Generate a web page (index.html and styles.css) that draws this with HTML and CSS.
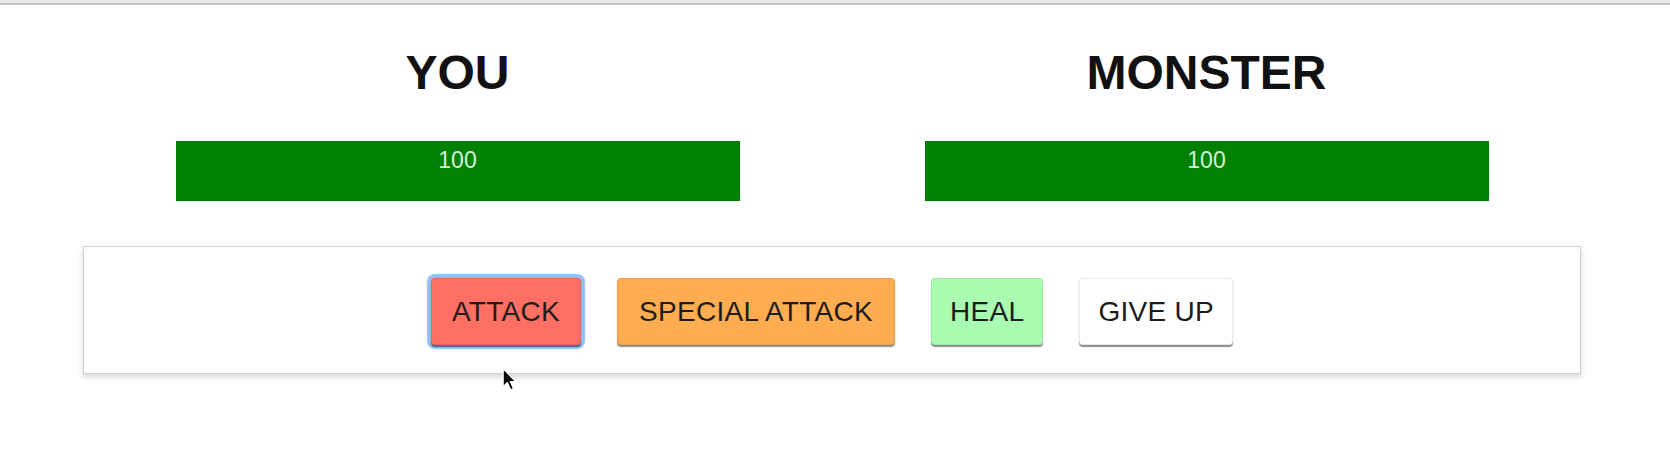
FILE: index.html
```html
<!DOCTYPE html>
<html lang="en">
<head>
<meta charset="utf-8">
<title>Monster Slayer</title>
<link rel="stylesheet" href="styles.css">
</head>
<body>
<div class="top-rule"></div>
<div class="page">
  <section class="stats">
    <div class="player">
      <h1 class="player-name">YOU</h1>
      <div class="healthbar">100</div>
    </div>
    <div class="player">
      <h1 class="player-name">MONSTER</h1>
      <div class="healthbar">100</div>
    </div>
  </section>
  <section class="controls">
    <button class="btn btn-attack is-focused">ATTACK</button>
    <button class="btn btn-special">SPECIAL ATTACK</button>
    <button class="btn btn-heal">HEAL</button>
    <button class="btn btn-giveup">GIVE UP</button>
  </section>
</div>
<svg class="cursor" width="14" height="24" viewBox="0 0 12 20" aria-hidden="true">
  <path d="M1 1 L1 16.5 L4.6 13 L7.4 19.2 L9.8 18.2 L7.1 12.2 L11.6 12.2 Z" fill="#000" stroke="#fff" stroke-width="1" stroke-linejoin="round"/>
</svg>
</body>
</html>
```

FILE: styles.css
```css
html, body {
  margin: 0;
  padding: 0;
  background: #fff;
  font-family: "Liberation Sans", Arial, Helvetica, sans-serif;
}

body {
  position: relative;
  min-height: 473px;
}

.top-rule {
  height: 3px;
  background: #ececec;
  border-bottom: 2px solid #c4c4c4;
}

.page {
  width: 1664px;
}

.stats {
  width: 1498px;
  margin: 0 auto;
  display: grid;
  grid-template-columns: 1fr 1fr;
}

.player {
  display: flex;
  flex-direction: column;
  align-items: center;
}

.player-name {
  margin: 40px 0 0;
  font-size: 48px;
  line-height: 55px;
  font-weight: 700;
  color: #111;
}

.healthbar {
  margin-top: 41px;
  width: 564px;
  height: 60px;
  box-sizing: border-box;
  padding-top: 6px;
  background: #008000;
  color: #d6f2d6;
  font-size: 23px;
  line-height: 26px;
  text-align: center;
}

.controls {
  width: 1498px;
  box-sizing: border-box;
  margin: 45px auto 0;
  padding: 31px 0 28px;
  border: 1px solid #cfcfcf;
  box-shadow: 0 3px 6px rgba(0, 0, 0, 0.16);
  display: flex;
  justify-content: center;
  gap: 36px;
}

.btn {
  height: 67px;
  padding: 0 19px;
  border: 1px solid rgba(0, 0, 0, 0.08);
  border-radius: 4px;
  font-family: "Liberation Sans", Arial, Helvetica, sans-serif;
  font-size: 28px;
  letter-spacing: 0.3px;
  color: #1c1c1c;
  box-shadow: 0 2px 1px rgba(0, 0, 0, 0.45);
  cursor: pointer;
}

.btn-attack {
  background: #ff6f63;
  padding: 0 20px;
}

.btn-special {
  background: #ffad50;
  padding: 0 21px;
}

.btn-heal {
  background: #a9fdb0;
  padding: 0 18px;
}

.btn-giveup {
  background: #fff;
  padding: 0 18px;
}

.is-focused {
  box-shadow: 0 2px 1px rgba(0, 0, 0, 0.45), 0 0 1px 4px rgba(120, 172, 240, 0.8);
}

.cursor {
  position: absolute;
  left: 502px;
  top: 367px;
}
```
